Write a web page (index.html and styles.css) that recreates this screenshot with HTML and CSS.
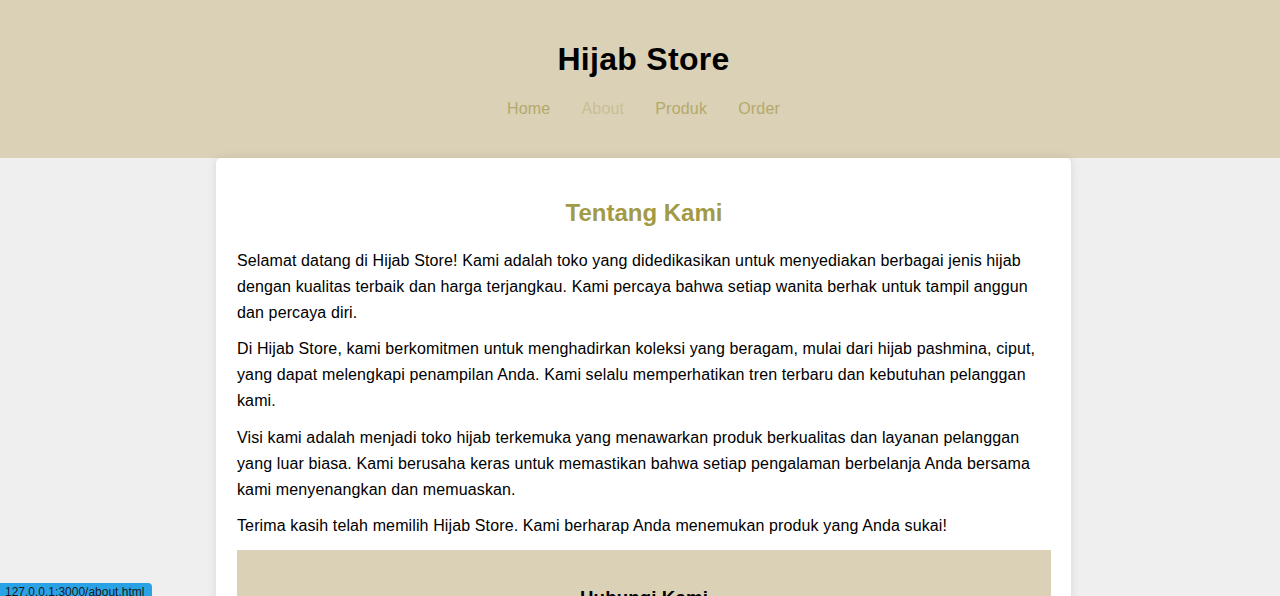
FILE: index.html
```html
<!DOCTYPE html>
<html lang="id">
<head>
<meta charset="utf-8">
<title>Tentang Kami - Hijab Store</title>
<link rel="stylesheet" href="styles.css">
</head>
<body>
<header class="site-header">
  <h1 class="site-title">Hijab Store</h1>
  <nav class="site-nav">
    <a href="#" class="nav-link">Home</a>
    <a href="#" class="nav-link nav-link-active">About</a>
    <a href="#" class="nav-link">Produk</a>
    <a href="#" class="nav-link">Order</a>
  </nav>
</header>
<div class="page">
  <main class="container">
    <h2 class="section-title">Tentang Kami</h2>
    <p class="text">Selamat datang di Hijab Store! Kami adalah toko yang didedikasikan untuk menyediakan berbagai jenis hijab dengan kualitas terbaik dan harga terjangkau. Kami percaya bahwa setiap wanita berhak untuk tampil anggun dan percaya diri.</p>
    <p class="text">Di Hijab Store, kami berkomitmen untuk menghadirkan koleksi yang beragam, mulai dari hijab pashmina, ciput, yang dapat melengkapi penampilan Anda. Kami selalu memperhatikan tren terbaru dan kebutuhan pelanggan kami.</p>
    <p class="text">Visi kami adalah menjadi toko hijab terkemuka yang menawarkan produk berkualitas dan layanan pelanggan yang luar biasa. Kami berusaha keras untuk memastikan bahwa setiap pengalaman berbelanja Anda bersama kami menyenangkan dan memuaskan.</p>
    <p class="text">Terima kasih telah memilih Hijab Store. Kami berharap Anda menemukan produk yang Anda sukai!</p>
    <section class="contact">
      <h3 class="contact-title">Hubungi Kami</h3>
      <p class="text">Email: info@hijabstore.com</p>
    </section>
  </main>
</div>
<div class="status-bar">127.0.0.1:3000/about.html</div>
</body>
</html>
```

FILE: styles.css
```css
html {
  scrollbar-width: none;
}
html::-webkit-scrollbar {
  display: none;
}
body {
  margin: 0;
  background: #efefef;
  font-family: "Liberation Sans", Arial, sans-serif;
  color: #000;
}
.site-header {
  background: #dbd1b6;
  padding: 41px 0 40px 7px;
  text-align: center;
}
.site-title {
  margin: 0 0 22px;
  font-size: 32px;
  line-height: 37px;
  font-weight: bold;
  letter-spacing: 0.3px;
}
.site-nav {
  display: flex;
  justify-content: center;
  line-height: 18px;
  font-size: 16px;
  letter-spacing: 0.2px;
}
.nav-link {
  color: #b3a96c;
  text-decoration: none;
  margin: 0 15.5px;
}
.nav-link-active {
  color: #c8bf95;
}
.page {
  padding-left: 7px;
}
.container {
  box-sizing: border-box;
  max-width: 855px;
  margin: 0 auto;
  padding: 20px 20px 20px 21px;
  background: #fff;
  border-radius: 5px;
  box-shadow: 0 0 10px rgba(0, 0, 0, 0.1);
}
.section-title {
  margin: 21px 0 21px;
  text-align: center;
  color: #a39a45;
  font-size: 24px;
  line-height: 28px;
}
.text {
  margin: 10.4px 0;
  font-size: 16px;
  line-height: 26px;
  letter-spacing: 0.12px;
}
.contact {
  background: #dbd1b6;
  padding: 20px;
  text-align: center;
}
.contact-title {
  margin: 17px 0 10px;
  font-size: 1.17em;
  line-height: 22px;
  letter-spacing: 0.1px;
}
.status-bar {
  position: fixed;
  left: 0;
  bottom: 0;
  height: 13px;
  padding: 0 8px 0 5px;
  background: #2aa3e6;
  border-top-right-radius: 4px;
  font-family: "Liberation Sans", Arial, sans-serif;
  font-size: 12px;
  line-height: 18px;
  color: #1a1a1a;
  overflow: hidden;
}
```
